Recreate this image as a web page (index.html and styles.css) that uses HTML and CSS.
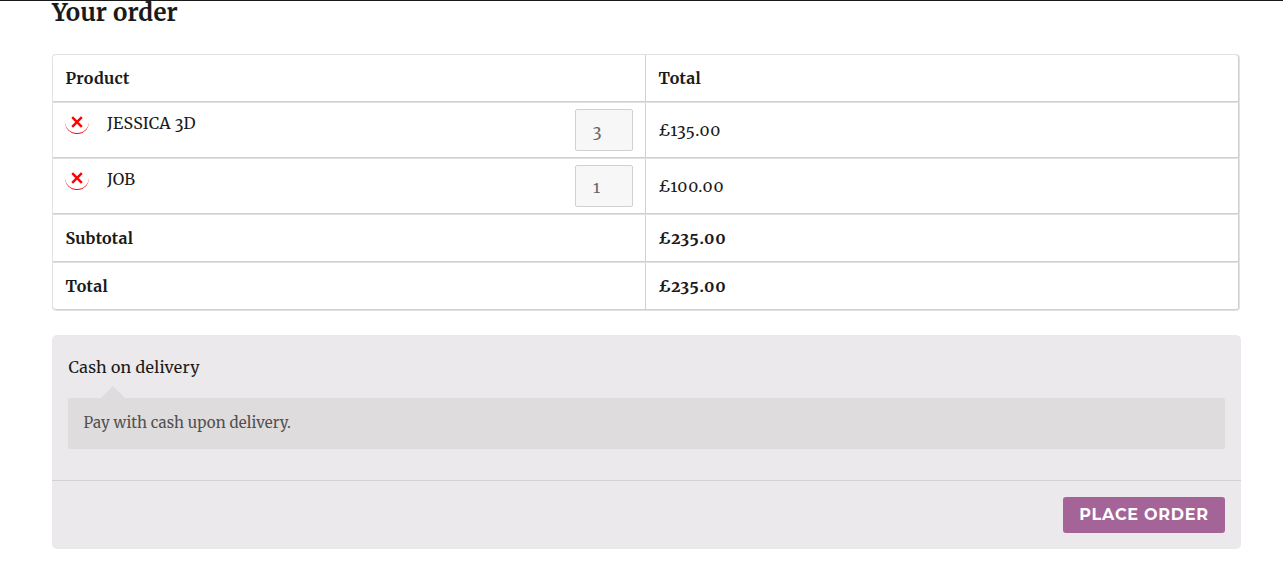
FILE: index.html
```
<!DOCTYPE html>
<html lang="en">
<head>
<meta charset="utf-8">
<title>Your order</title>
<link rel="stylesheet" href="styles.css">
</head>
<body>
<main class="checkout">
  <h3 class="heading">Your order</h3>
  <div class="order">
    <div class="row strong">
      <div class="cell">Product</div>
      <div class="cell">Total</div>
    </div>
    <div class="row item">
      <div class="cell">
        <a class="remove"><svg width="12" height="12" viewBox="0 0 12 12"><path d="M1.2 1.2 10.8 10.8M10.8 1.2 1.2 10.8"/></svg></a>
        <span class="name">JESSICA 3D</span>
        <span class="qty">3</span>
      </div>
      <div class="cell price">£135.00</div>
    </div>
    <div class="row item">
      <div class="cell">
        <a class="remove"><svg width="12" height="12" viewBox="0 0 12 12"><path d="M1.2 1.2 10.8 10.8M10.8 1.2 1.2 10.8"/></svg></a>
        <span class="name">JOB</span>
        <span class="qty">1</span>
      </div>
      <div class="cell price">£100.00</div>
    </div>
    <div class="row strong">
      <div class="cell">Subtotal</div>
      <div class="cell price">£235.00</div>
    </div>
    <div class="row strong">
      <div class="cell">Total</div>
      <div class="cell price">£235.00</div>
    </div>
  </div>
  <section class="payment">
    <div class="methods">
      <div class="method">Cash on delivery</div>
      <div class="note">Pay with cash upon delivery.</div>
    </div>
    <div class="actions"><button class="place">PLACE ORDER</button></div>
  </section>
</main>
</body>
</html>
```
FILE: styles.css
```
* { box-sizing: border-box; }
body {
  margin: 0;
  height: 580px;
  overflow: hidden;
  background: #fff;
  border-top: 1px solid #1a1a1a;
  color: #1a1a1a;
  font: 380 16px/24px "Merriweather", "DejaVu Serif Condensed", serif;
  font-variant-numeric: oldstyle-nums;
  letter-spacing: 0.27px;
}
.checkout { padding: 0 42px 0 52px; }
.heading { margin: 0; height: 53px; font-size: 24px; line-height: 24px; font-weight: 700; letter-spacing: 0.2px; }
.order {
  width: 1188px;
  border: 1px solid #e2e2e2;
  border-bottom: 0;
  border-radius: 4px;
  box-shadow: inset -1px 0 #cfcfcf;
}
.row {
  display: grid;
  grid-template-columns: 592px 594px;
  height: 48px;
  border-bottom: 1px solid #e2e2e2;
  box-shadow: inset 0 -1px #cfcfcf;
}
.row:last-child { border-radius: 0 0 4px 4px; }
.item { height: 56px; }
.cell { display: flex; align-items: center; padding: 0 12px 1px 12.5px; }
.cell + .cell { border-left: 1px solid #d1d1d1; }
.item .cell:first-child { padding: 6px 12px; align-items: flex-start; }
.strong { font-weight: 670; }
.price { letter-spacing: 0.8px; }
.remove {
  display: grid;
  place-items: center;
  width: 24px;
  height: 24px;
  margin-top: 1px;
  border-radius: 50%;
  border-bottom: 1px solid #f00;
}
.remove svg { fill: none; stroke: #f00; stroke-width: 2.4; }
.name { margin: 2px 0 0 18px; }
.qty {
  margin-left: auto;
  width: 58px;
  height: 42px;
  padding: 9px 17px 0;
  border: 1px solid #d1d1d1;
  border-radius: 2px;
  background: #f7f7f7;
  color: #686868;
}
.payment { width: 1189px; height: 214px; margin-top: 24px; border-radius: 5px; background: #ebe9eb; }
.methods { height: 146px; padding: 20px 16px 0; border-bottom: 1px solid #d1d0d2; }
.method { height: 43px; padding-left: 0.5px; }
.note {
  position: relative;
  height: 51px;
  padding: 13px 15.5px;
  border-radius: 2px;
  background: #dfdcde;
  color: #515151;
  font-size: 15px;
  letter-spacing: 0.13px;
}
.note::before {
  content: "";
  position: absolute;
  left: 33px;
  top: -12px;
  border: 12px solid transparent;
  border-top: 0;
  border-bottom-color: #dfdcde;
}
.actions { display: flex; justify-content: flex-end; padding: 16px; }
.place {
  width: 162px;
  height: 36px;
  padding: 0;
  border: 0;
  border-radius: 3px;
  background: #a46497;
  color: #fff;
  font: 700 16px/34px "Montserrat", "Open Sans", sans-serif;
  letter-spacing: 0.75px;
  white-space: nowrap;
}
```
